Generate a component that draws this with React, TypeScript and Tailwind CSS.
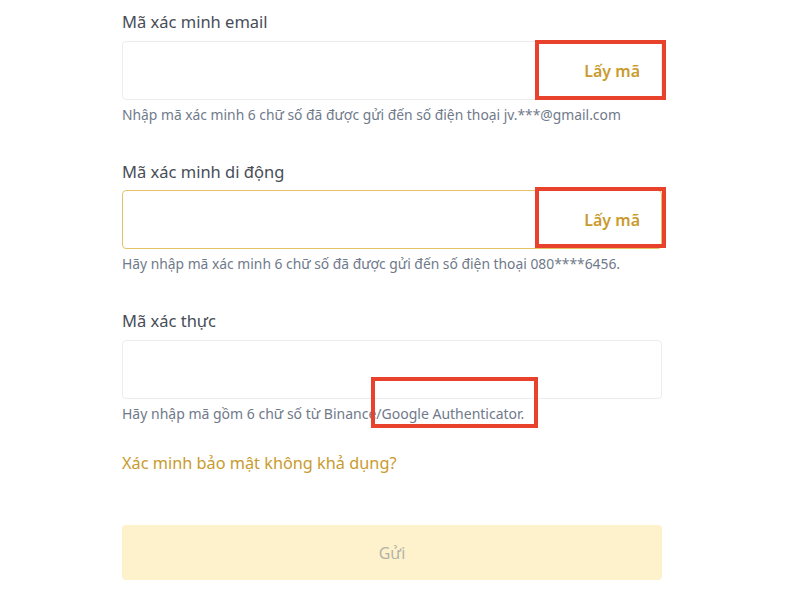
export default function App() {
  const field =
    "h-[59px] w-full rounded-[4px] border bg-white";

  return (
    <div className="min-h-[600px] w-full bg-white font-['Noto_Sans',sans-serif] text-[#1e2329]">
      <div className="ml-[122px] flex w-[540px] flex-col pt-[10px]">
        {/* email */}
        <label className="text-[16.5px] leading-[24px] text-[#474d57]">Mã xác minh email</label>
        <div className="relative mt-[7px]">
          <div className={`${field} flex items-center justify-end border-[#eaecef] pr-[21px]`}>
            <span className="text-[16px] font-semibold text-[#c99b2e]">Lấy mã</span>
          </div>
          <div className="absolute left-[413px] top-[-1px] h-[60px] w-[131px] border-4 border-[#e8412c]" />
        </div>
        <p className="mt-[5px] text-[13.85px] leading-[20px] text-[#707a8a]">
          Nhập mã xác minh 6 chữ số đã được gửi đến số điện thoại jv.***@gmail.com
        </p>

        {/* mobile */}
        <label className="mt-[35px] text-[16.5px] leading-[24px] text-[#474d57]">Mã xác minh di động</label>
        <div className="relative mt-[6px]">
          <div className={`${field} flex items-center justify-end border-[#e3c466] pr-[21px]`}>
            <span className="text-[16px] font-semibold text-[#c99b2e]">Lấy mã</span>
          </div>
          <div className="absolute left-[413px] top-[-3px] h-[61px] w-[131px] border-4 border-[#e8412c]" />
        </div>
        <p className="mt-[5px] text-[13.85px] leading-[20px] text-[#707a8a]">
          Hãy nhập mã xác minh 6 chữ số đã được gửi đến số điện thoại 080****6456.
        </p>

        {/* authenticator */}
        <label className="mt-[35px] text-[16.5px] leading-[24px] text-[#474d57]">Mã xác thực</label>
        <div className={`${field} mt-[7px] border-[#eaecef]`} />
        <div className="relative">
          <p className="mt-[5px] text-[14px] leading-[20px] text-[#707a8a]">
            Hãy nhập mã gồm 6 chữ số từ Binance/Google Authenticator.
          </p>
          <div className="absolute left-[249px] top-[-22px] h-[51px] w-[167px] border-4 border-[#e8412c]" />
        </div>

        <a className="mt-[27px] text-[16.3px] leading-[24px] text-[#c99b2e]">
          Xác minh bảo mật không khả dụng?
        </a>

        <button
          className="mt-[50px] h-[55px] w-full rounded-[4px] bg-[#fdf2cc] text-[16px] text-[#b7b2a8]"
          disabled
        >
          Gửi
        </button>
      </div>
    </div>
  );
}
